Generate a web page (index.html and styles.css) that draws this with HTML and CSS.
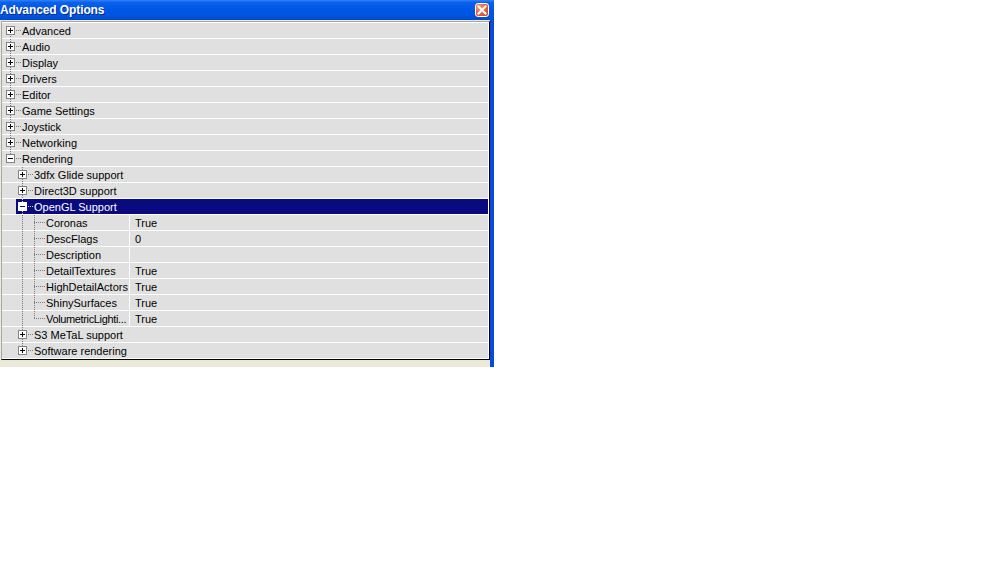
FILE: index.html
```html
<!DOCTYPE html>
<html>
<head>
<meta charset="utf-8">
<title>Advanced Options</title>
<link rel="stylesheet" href="styles.css">
</head>
<body>
<div class="window">
  <div class="titlebar">
    <span class="title">Advanced Options</span>
    <span class="close"><svg width="10" height="10" viewBox="0 0 10 10"><path d="M1.5 1.5 L8.5 8.5 M8.5 1.5 L1.5 8.5" stroke="#fff" stroke-width="2" stroke-linecap="square"/></svg></span>
  </div>
  <div class="frame">
    <div class="list">
      <div class="rows">
        <div class="row"><span class="exp first"><span class="box"></span></span><span class="label">Advanced</span></div>
        <div class="row"><span class="exp mid"><span class="box"></span></span><span class="label">Audio</span></div>
        <div class="row"><span class="exp mid"><span class="box"></span></span><span class="label">Display</span></div>
        <div class="row"><span class="exp mid"><span class="box"></span></span><span class="label">Drivers</span></div>
        <div class="row"><span class="exp mid"><span class="box"></span></span><span class="label">Editor</span></div>
        <div class="row"><span class="exp mid"><span class="box"></span></span><span class="label">Game Settings</span></div>
        <div class="row"><span class="exp mid"><span class="box"></span></span><span class="label">Joystick</span></div>
        <div class="row"><span class="exp mid"><span class="box"></span></span><span class="label">Networking</span></div>
        <div class="row"><span class="exp last"><span class="box minus"></span></span><span class="label">Rendering</span></div>
        <div class="row"><span class="ind"></span><span class="exp mid"><span class="box"></span></span><span class="label">3dfx Glide support</span></div>
        <div class="row"><span class="ind"></span><span class="exp mid"><span class="box"></span></span><span class="label">Direct3D support</span></div>
        <div class="row"><span class="ind"></span><span class="sel"><span class="exp mid"><span class="box minus"></span></span><span class="label">OpenGL Support</span></span></div>
        <div class="row"><span class="ind"></span><span class="ind v"></span><span class="exp mid"></span><span class="name">Coronas</span><span class="val">True</span></div>
        <div class="row"><span class="ind"></span><span class="ind v"></span><span class="exp mid"></span><span class="name">DescFlags</span><span class="val">0</span></div>
        <div class="row"><span class="ind"></span><span class="ind v"></span><span class="exp mid"></span><span class="name">Description</span><span class="val"></span></div>
        <div class="row"><span class="ind"></span><span class="ind v"></span><span class="exp mid"></span><span class="name">DetailTextures</span><span class="val">True</span></div>
        <div class="row"><span class="ind"></span><span class="ind v"></span><span class="exp mid"></span><span class="name">HighDetailActors</span><span class="val">True</span></div>
        <div class="row"><span class="ind"></span><span class="ind v"></span><span class="exp mid"></span><span class="name">ShinySurfaces</span><span class="val">True</span></div>
        <div class="row"><span class="ind"></span><span class="ind v"></span><span class="exp last"></span><span class="name tight">VolumetricLighti...</span><span class="val">True</span></div>
        <div class="row"><span class="ind"></span><span class="exp mid"><span class="box"></span></span><span class="label">S3 MeTaL support</span></div>
        <div class="row"><span class="ind"></span><span class="exp last"><span class="box"></span></span><span class="label">Software rendering</span></div>
      </div>
    </div>
  </div>
</div>
</body>
</html>
```
FILE: styles.css
```css
:root {
  --dc: #7a7a7a;
}
body {
  margin: 0;
  background: #fff;
  font-family: "Liberation Sans", Arial, sans-serif;
}
.window {
  width: 494px;
  height: 367px;
  display: flex;
  flex-direction: column;
}
.titlebar {
  height: 20px;
  flex: none;
  display: flex;
  align-items: center;
  background: linear-gradient(to bottom, #2f83f7 0%, #0b60ec 12%, #0058e6 45%, #0054e0 80%, #0049cc 100%);
  color: #fff;
}
.title {
  flex: 1;
  font-weight: bold;
  font-size: 12px;
  letter-spacing: -0.1px;
  line-height: 20px;
  text-shadow: 1px 1px 0 #0a2a8a;
}
.close {
  width: 14px;
  height: 14px;
  box-sizing: border-box;
  margin-right: 5px;
  border: 1px solid #fff;
  border-radius: 3px;
  background: radial-gradient(circle at 30% 30%, #f39a7c 0%, #e2603c 55%, #c8431f 100%);
  display: flex;
  align-items: center;
  justify-content: center;
}
.close svg { display: block; }
.frame {
  flex: 1;
  display: flex;
  background: #ece9d8;
  border-right: 4px solid #0a4ad8;
  padding: 1px 0 7px 1px;
}
.list {
  flex: 1;
  border-top: 1px solid #a7a6a0;
  border-left: 1px solid #a7a6a0;
  border-right: 1px solid #000;
  border-bottom: 1px solid #000;
}
.rows {
  border-top: 1px solid #fff;
  border-right: 1px solid #fff;
}
.row {
  height: 15px;
  overflow: hidden;
  border-bottom: 1px solid #fff;
  background: #e0e0e0;
  display: flex;
  padding-left: 2px;
  font-size: 11px;
  line-height: 15px;
  color: #000;
  white-space: nowrap;
}
.label, .name, .val {
  padding-top: 1px;
}
.ind {
  width: 12px;
  flex: none;
}
.ind.v {
  background-image: repeating-linear-gradient(to bottom, var(--dc) 0 1px, transparent 1px 2px);
  background-position: 6px 0;
  background-size: 1px 100%;
  background-repeat: no-repeat;
}
.exp {
  width: 18px;
  flex: none;
  box-sizing: border-box;
  padding-left: 2px;
  display: flex;
  align-items: center;
  --vline: none;
  --vy: 0px;
  --vh: 100%;
  background-image: repeating-linear-gradient(to right, var(--dc) 0 1px, transparent 1px 2px), var(--vline);
  background-position: 6px 7px, 6px var(--vy);
  background-size: 12px 1px, 1px var(--vh);
  background-repeat: no-repeat;
}
.exp.mid { --vline: repeating-linear-gradient(to bottom, var(--dc) 0 1px, transparent 1px 2px); }
.exp.first { --vline: repeating-linear-gradient(to bottom, var(--dc) 0 1px, transparent 1px 2px); --vy: 7px; --vh: 8px; }
.exp.last { --vline: repeating-linear-gradient(to bottom, var(--dc) 0 1px, transparent 1px 2px); --vh: 8px; }
.box {
  width: 9px;
  height: 9px;
  box-sizing: border-box;
  border: 1px solid #848484;
  background:
    linear-gradient(#000, #000) center / 5px 1px no-repeat,
    linear-gradient(#000, #000) center / 1px 5px no-repeat,
    #fff;
}
.box.minus {
  background:
    linear-gradient(#000, #000) center / 5px 1px no-repeat,
    #fff;
}
.label {
  flex: 1;
}
.sel {
  flex: 1;
  display: flex;
  background: #0a0a80;
  color: #fff;
  --dc: #c8c8e8;
}
.sel .box.minus {
  border-color: #fff;
  background:
    linear-gradient(#0a0a80, #0a0a80) center / 5px 1px no-repeat,
    #fff;
}
.name {
  width: 83px;
  flex: none;
  overflow: hidden;
  border-right: 1px solid #fff;
}
.name.tight {
  letter-spacing: -0.35px;
}
.val {
  flex: 1;
  padding-left: 5px;
}
```
